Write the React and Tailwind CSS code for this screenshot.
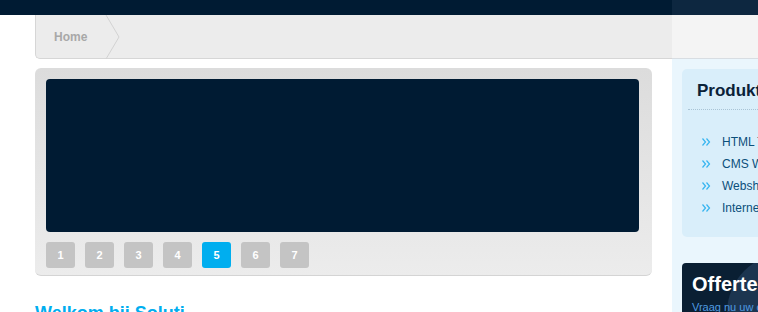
import React from "react";

const products = ["HTML Templates", "CMS Websites", "Webshops", "Internet Marketing"];
const slides = [1, 2, 3, 4, 5, 6, 7];

function Chevrons() {
  return (
    <svg width="9" height="8" viewBox="0 0 9 8" className="shrink-0">
      <path d="M0.5 0.5 L3.5 4 L0.5 7.5 M4.5 0.5 L7.5 4 L4.5 7.5" fill="none" stroke="#35b4f0" strokeWidth="1.2" />
    </svg>
  );
}

function App() {
  return (
    <div className="w-[758px] h-[312px] overflow-hidden bg-white font-['Liberation_Sans',Arial,sans-serif]">
      {/* top bar */}
      <div className="flex h-[15px]">
        <div className="w-[672px] bg-[#001b33]" />
        <div className="flex-1 bg-[#0d2740]" />
      </div>

      <div className="flex">
        <div className="w-[35px] shrink-0" />

        {/* main column */}
        <div className="w-[637px] shrink-0">
          <div className="flex h-[44px] items-stretch bg-[#ececec] border-l border-b border-[#d6d6d6] rounded-bl-[5px]">
            <div className="relative flex items-center pl-[18px] pr-[34px]">
              <span className="text-[12px] font-bold text-[#a8a8a8]">Home</span>
              <svg className="absolute right-0 top-0" width="16" height="44" viewBox="0 0 16 44">
                <path d="M1 0 L14 22 L1 44" fill="none" stroke="#d2d2d2" strokeWidth="1" />
              </svg>
            </div>
          </div>

          <div className="pr-[20px] pt-[9px]">
            <div className="h-[208px] rounded-[6px] bg-gradient-to-b from-[#dcdcdc] to-[#ececec] border-b border-[#d4d4d4] pt-[11px] pl-[11px] pr-[13px]">
              <div className="h-[153px] rounded-[4px] bg-[#001b33]" />
              <div className="flex gap-[10px] mt-[10px]">
                {slides.map((n) => (
                  <div
                    key={n}
                    className={
                      n === 5
                        ? "w-[29px] h-[26px] rounded-[3px] bg-[#00aeef] flex items-center justify-center text-[11px] font-bold text-white"
                        : "w-[29px] h-[26px] rounded-[3px] bg-[#c4c4c4] flex items-center justify-center text-[11px] font-bold text-white"
                    }
                  >
                    {n}
                  </div>
                ))}
              </div>
            </div>
            <h1 className="mt-[26px] text-[18px] font-bold text-[#00aeef] leading-[22px]">Welkom bij Soluti</h1>
          </div>
        </div>

        {/* sidebar */}
        <div className="w-[260px] shrink-0">
          <div className="h-[44px] bg-[#f4f4f4] border-b border-[#d8dde2]" />
          <div className="bg-[#eaf6fd] pl-[10px] pt-[10px] h-[260px]">
            <div className="h-[168px] rounded-[5px] bg-[#d9eefa] pl-[6px]">
              <div className="pl-[9px] pt-[12px] pb-[8px] border-b border-dotted border-[#a9c4d6]">
                <h2 className="text-[17px] font-bold text-[#0b2239] leading-[20px]">Produkten</h2>
              </div>
              <ul className="mt-[25px] pl-[14px] flex flex-col gap-[8px]">
                {products.map((p) => (
                  <li key={p} className="flex items-center gap-[11px] h-[14px]">
                    <Chevrons />
                    <span className="text-[12px] text-[#0b4f7a] whitespace-nowrap">{p}</span>
                  </li>
                ))}
              </ul>
            </div>
            <div className="relative mt-[26px] h-[70px] rounded-[4px] bg-[#0a1f33] overflow-hidden pl-[10px] pt-[9px]">
              <div className="absolute left-[45px] top-[-10px] w-[120px] h-[120px] rounded-full bg-[#1c3550]" />
              <div className="relative text-[20px] font-bold text-white leading-[24px]">Offerte aanvragen</div>
              <div className="relative text-[11px] text-[#4f9be0] leading-[14px] mt-[4px]">Vraag nu uw offerte aan</div>
            </div>
          </div>
        </div>
      </div>
    </div>
  );
}

export default App;
